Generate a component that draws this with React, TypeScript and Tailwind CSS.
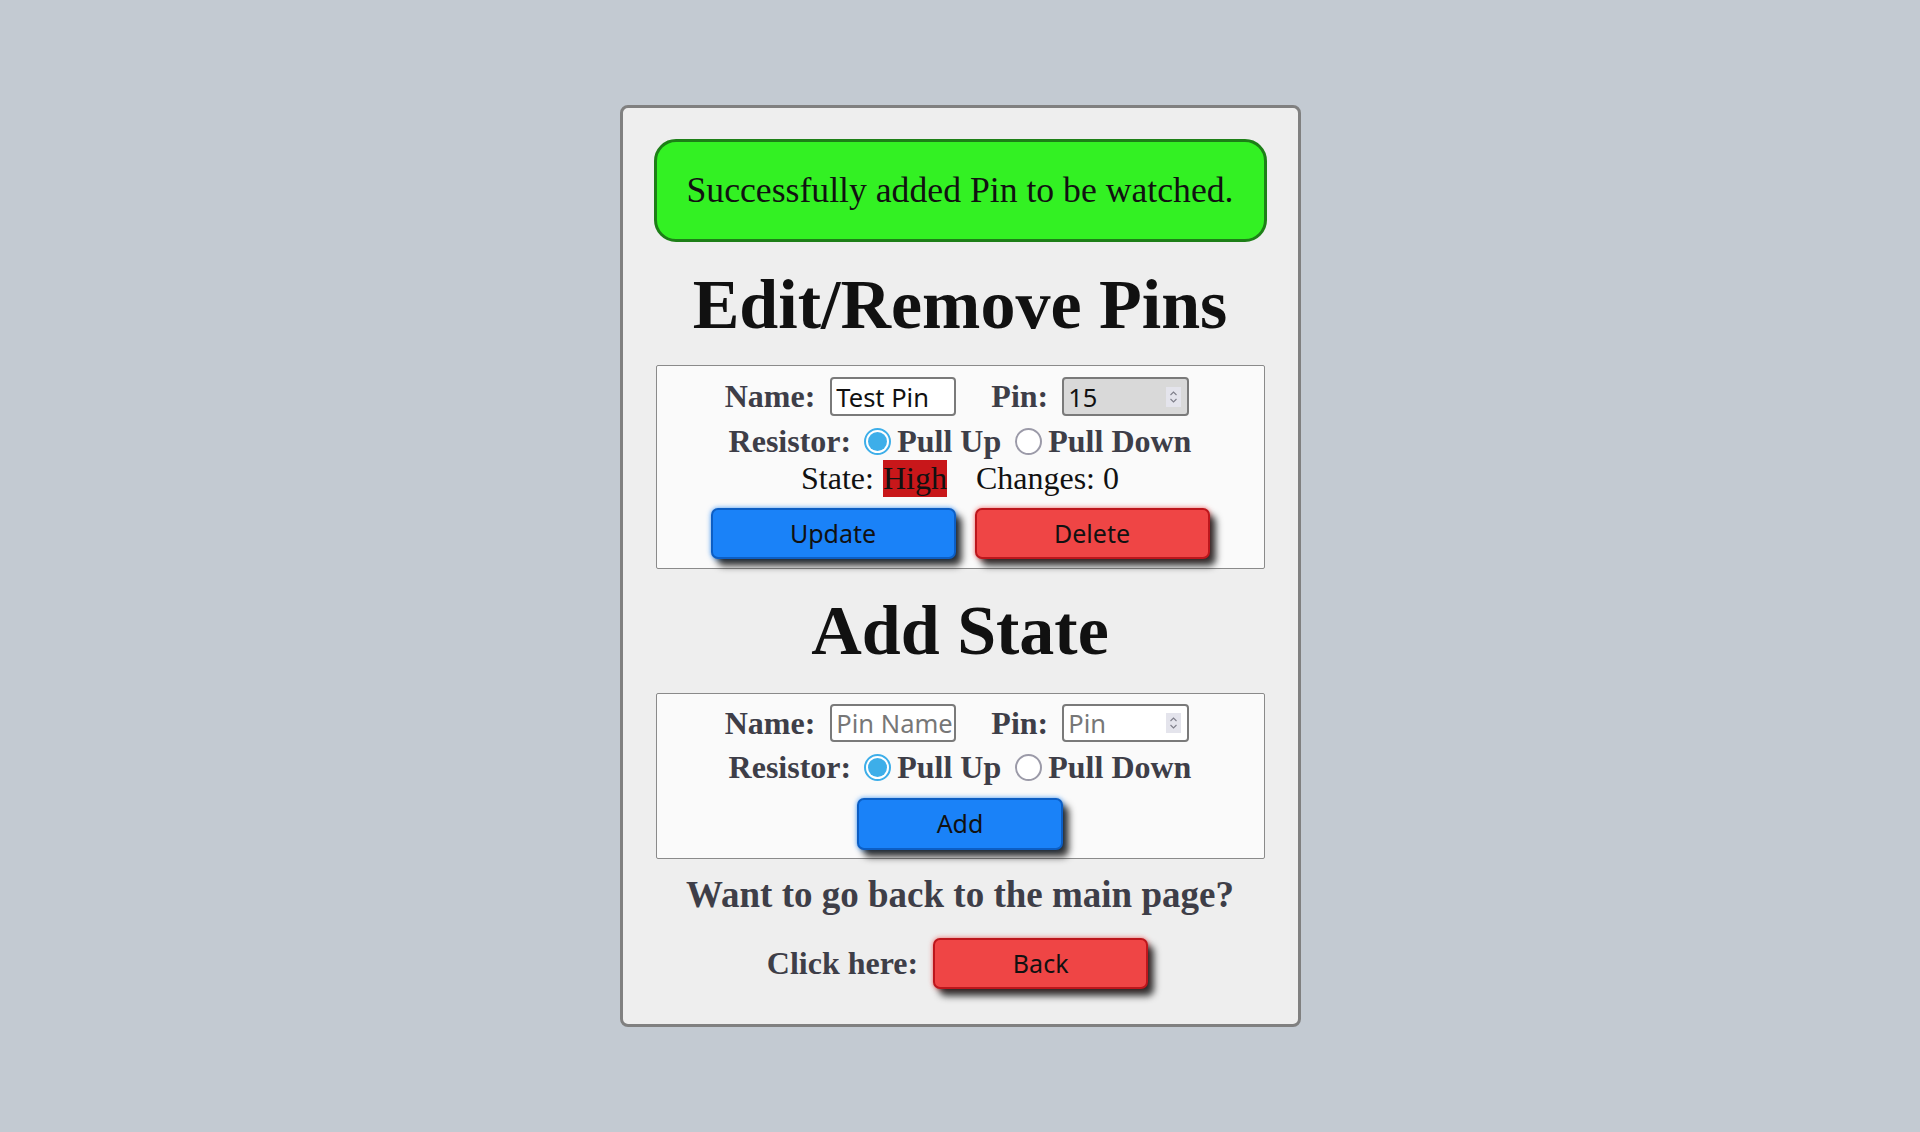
import React from "react";

const serif = "font-['Liberation_Serif',serif]";
const sans = "font-['Noto_Sans',sans-serif]";

function Radio({ checked }: { checked: boolean }) {
  if (checked) {
    return (
      <span className="inline-flex w-[27px] h-[27px] rounded-full border-2 border-[#3daee9] p-[2px] bg-white shrink-0">
        <span className="w-full h-full rounded-full bg-[#3daee9]" />
      </span>
    );
  }
  return <span className="inline-block w-[27px] h-[27px] rounded-full border-2 border-[#9b9aa8] bg-white shrink-0" />;
}

function Spinner() {
  return (
    <span className="absolute right-[8px] top-1/2 -translate-y-1/2 w-[15px] h-[20px] bg-[#e4e4ec] flex items-center justify-center">
      <svg width="9" height="14" viewBox="0 0 9 14" fill="none" stroke="#7f7f8a" strokeWidth="1.1">
        <path d="M1.5 5 L4.5 2 L7.5 5" />
        <path d="M1.5 9 L4.5 12 L7.5 9" />
      </svg>
    </span>
  );
}

function NameInput({ value, placeholder, h }: { value?: string; placeholder?: string; h: string }) {
  return (
    <input
      type="text"
      readOnly
      defaultValue={value}
      placeholder={placeholder}
      className={`${sans} ${h} w-[126px] border-2 border-[#7a7a7a] rounded-[4px] bg-white pl-[4px] pr-0 text-[25.5px] text-[#111] placeholder:text-[#777] outline-none`}
    />
  );
}

function PinInput({ value, placeholder, gray, h }: { value?: string; placeholder?: string; gray?: boolean; h: string }) {
  return (
    <span className="relative inline-block">
      <input
        type="text"
        readOnly
        defaultValue={value}
        placeholder={placeholder}
        className={`${sans} ${h} w-[127px] border-2 border-[#7a7a7a] rounded-[4px] ${gray ? "bg-[#d9d9d9]" : "bg-white"} px-[4px] text-[25.5px] text-[#111] placeholder:text-[#777] outline-none`}
      />
      <Spinner />
    </span>
  );
}

function NameRow({ gray, name, pin, h }: { gray?: boolean; name?: string; pin?: string; h: string }) {
  return (
    <div className={`flex items-center justify-center pr-[6px] ${h}`}>
      <span className="font-bold text-[32px] leading-[37px] text-[#3e3e48]">Name:</span>
      <span className="ml-[15px] flex">
        {name ? <NameInput value={name} h={h} /> : <NameInput placeholder="Pin Name" h={h} />}
      </span>
      <span className="ml-[35px] font-bold text-[32px] leading-[37px] text-[#3e3e48]">Pin:</span>
      <span className="ml-[14px] flex">
        {pin ? <PinInput value={pin} gray={gray} h={h} /> : <PinInput placeholder="Pin" h={h} />}
      </span>
    </div>
  );
}

function ResistorRow() {
  return (
    <div className="flex items-center justify-center h-[37px] mt-[7px] font-bold text-[32px] leading-[37px] text-[#3e3e48]">
      <span>Resistor:</span>
      <span className="ml-[13px] flex"><Radio checked /></span>
      <span className="ml-[6px]">Pull Up</span>
      <span className="ml-[14px] flex"><Radio checked={false} /></span>
      <span className="ml-[6px]">Pull Down</span>
    </div>
  );
}

function Btn({ color, w, h, children }: { color: "blue" | "red"; w: string; h: string; children: React.ReactNode }) {
  const cls =
    color === "blue"
      ? "bg-[#1a82f8] border-[#0c5ec4] shadow-[6px_7px_7px_rgba(0,0,0,0.78),0_0_5px_rgba(26,130,248,0.8)]"
      : "bg-[#ef4545] border-[#bd161c] shadow-[6px_7px_7px_rgba(0,0,0,0.78),0_0_5px_rgba(239,69,69,0.8)]";
  return (
    <button
      type="button"
      className={`${sans} ${w} ${h} ${cls} border-2 rounded-[7px] text-[25px] text-[#111] flex items-center justify-center`}
    >
      {children}
    </button>
  );
}

export default function App() {
  return (
    <div className={`${serif} min-h-screen w-full bg-[#c3cad2] flex items-center justify-center`}>
      <div className="w-[681px] h-[922px] shrink-0 bg-[#eeeeee] border-[3px] border-[#808080] rounded-[8px] pt-[31px] px-[33px] flex flex-col">
        <div className="-mx-[2px] h-[103px] bg-[#33f123] border-[3px] border-[#1d7f17] rounded-[22px] flex items-center justify-center">
          <span className="text-[35.7px] leading-[41px] text-[#111]">Successfully added Pin to be watched.</span>
        </div>

        <h1 className="mt-[23px] text-center font-bold text-[70px] leading-[80px] text-[#111]">Edit/Remove Pins</h1>

        <div className="mt-[20px] bg-[#fafafa] border border-[#8a8a8a] rounded-[2px] pt-[11px] pb-[9px]">
          <NameRow gray name="Test Pin" pin="15" h="h-[39px]" />
          <ResistorRow />
          <div className="flex items-center justify-center h-[36px] text-[32px] leading-[37px] text-[#111]">
            <span>State:</span>
            <span className="ml-[9px] bg-[#c8171a]">High</span>
            <span className="ml-[29px]">Changes: 0</span>
          </div>
          <div className="mt-[12px] flex justify-center gap-[19px]">
            <Btn color="blue" w="w-[245px]" h="h-[51px]">Update</Btn>
            <Btn color="red" w="w-[235px]" h="h-[51px]">Delete</Btn>
          </div>
        </div>

        <h1 className="mt-[22px] text-center font-bold text-[70px] leading-[80px] text-[#111]">Add State</h1>

        <div className="mt-[22px] bg-[#fafafa] border border-[#8a8a8a] rounded-[2px] pt-[10px] pb-[8px]">
          <NameRow h="h-[38px]" />
          <ResistorRow />
          <div className="mt-[12px] flex justify-center">
            <Btn color="blue" w="w-[206px]" h="h-[52px]">Add</Btn>
          </div>
        </div>

        <h3 className="mt-[15px] text-center font-bold text-[37px] leading-[42px] text-[#3e3e48]">Want to go back to the main page?</h3>

        <div className="mt-[22px] flex items-center justify-center h-[51px] pr-[5px]">
          <span className="font-bold text-[32px] leading-[37px] text-[#3e3e48]">Click here:</span>
          <span className="ml-[15px] flex">
            <Btn color="red" w="w-[215px]" h="h-[51px]">Back</Btn>
          </span>
        </div>
      </div>
    </div>
  );
}
